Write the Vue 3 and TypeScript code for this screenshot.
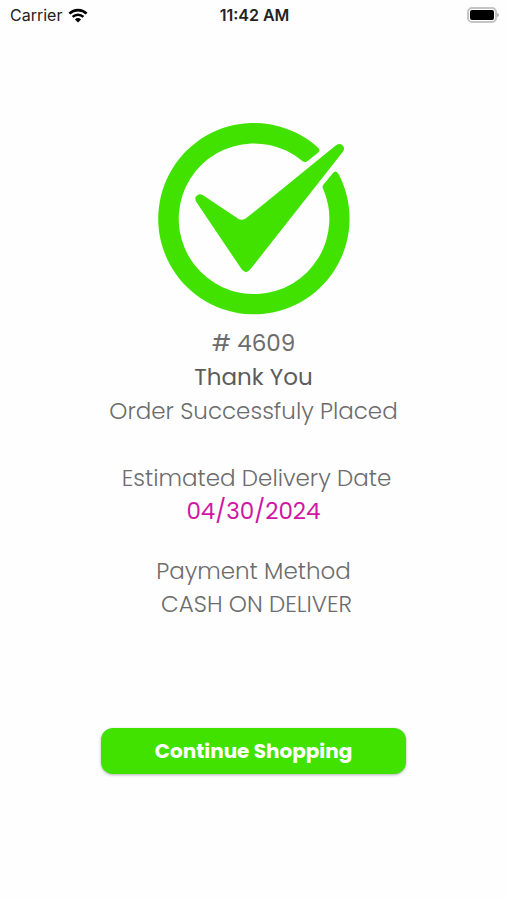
<script setup lang="ts">
interface Order {
  id: number
  deliveryDate: string
  paymentMethod: string
}

const order: Order = {
  id: 4609,
  deliveryDate: '04/30/2024',
  paymentMethod: 'CASH ON DELIVER',
}
</script>

<template>
  <div class="screen">
    <header class="status-bar">
      <div class="carrier">
        <span>Carrier</span>
        <svg class="wifi" viewBox="0 0 20 15" aria-hidden="true">
          <path d="M1.4 5.6a12.4 12.4 0 0 1 17.2 0" />
          <path d="M4.6 8.9a7.8 7.8 0 0 1 10.8 0" />
          <path class="dot" d="M6.9 11.4a4.5 4.5 0 0 1 6.2 0L10 14.6z" />
        </svg>
      </div>
      <time class="clock">11:42 AM</time>
      <svg class="battery" viewBox="0 0 33 17" aria-hidden="true">
        <rect class="shell" x="2" y="1" width="28" height="14" rx="4" />
        <rect x="4" y="3" width="24" height="10" rx="2" />
        <path class="cap" d="M31 6q2 .5 2 2t-2 2z" />
      </svg>
    </header>

    <main class="content">
      <svg class="success" viewBox="24 24 576 576" aria-hidden="true">
        <path d="M496 91A287 287 0 1 0 566 178Q558 163 549 174L520 209Q517 213 518 218A226 226 0 1 1 456 137Q465 144 473 138L504 113Q513 106 504 98Z" />
        <path d="M158 240L258 307Q275 322 292 307L558 91Q571 83 579 92Q586 101 578 111L301 463Q288 480 275 463L139 261Q133 250 139 243Q147 234 158 240Z" />
      </svg>

      <section class="summary">
        <p class="regular"># {{ order.id }}</p>
        <h1 class="thanks">Thank You</h1>
        <p>Order Successfuly Placed</p>
      </section>

      <section class="details delivery">
        <h2 class="indented">Estimated Delivery Date</h2>
        <p class="date">{{ order.deliveryDate }}</p>
      </section>

      <section class="details payment">
        <h2>Payment Method</h2>
        <p class="indented">{{ order.paymentMethod }}</p>
      </section>

      <button class="continue" type="button">Continue Shopping</button>
    </main>
  </div>
</template>

<style>
body {
  margin: 0;
  background: #fefefe;
}
</style>

<style scoped>
.screen {
  min-height: 100vh;
  box-sizing: border-box;
  padding-bottom: 24px;
  font-family: Poppins, Inter, sans-serif;
  color: #6c6c6c;
}

.status-bar {
  display: grid;
  grid-template-columns: 1fr auto 1fr;
  align-items: center;
  height: 30px;
  padding: 0 8px 0 10px;
  font-family: Inter, sans-serif;
  font-size: 16px;
  color: #222;
}

.carrier {
  display: flex;
  align-items: center;
  gap: 6px;
}

.wifi {
  width: 20px;
  height: 15px;
  fill: none;
  stroke: #000;
  stroke-width: 2.6;
}

.wifi .dot {
  fill: #000;
  stroke: none;
}

.clock {
  font-weight: 600;
}

.battery {
  justify-self: end;
  width: 33px;
  height: 17px;
}

.battery .shell {
  fill: #fff;
  stroke: #c4c4c4;
  stroke-width: 2;
}

.battery .cap {
  fill: #b4b4b4;
}

.content {
  display: flex;
  flex-direction: column;
  align-items: center;
  padding-top: 93px;
  text-align: center;
  font-size: 23px;
  font-weight: 300;
  line-height: 34px;
}

.success {
  width: 192px;
  height: 192px;
  fill: #41e200;
}

.summary {
  margin-top: 11px;
}

.details {
  line-height: 33px;
}

.delivery {
  margin-top: 34px;
}

.payment {
  margin-top: 27px;
}

h1,
h2,
p {
  margin: 0;
  font-size: inherit;
  font-weight: inherit;
}

.indented {
  padding-left: 6px;
}

.regular {
  font-weight: 400;
}

.thanks {
  font-weight: 400;
  color: #5c5c5c;
}

.date {
  font-weight: 400;
  color: #d016a4;
}

.continue {
  width: 60%;
  height: 46px;
  margin-top: 107px;
  padding: 0;
  border: 0;
  border-radius: 12px;
  background: #41e200;
  box-shadow: 0 1px 3px rgba(0, 0, 0, 0.3);
  color: #fff;
  font-family: inherit;
  font-size: 20px;
  font-weight: 700;
  cursor: pointer;
}
</style>
